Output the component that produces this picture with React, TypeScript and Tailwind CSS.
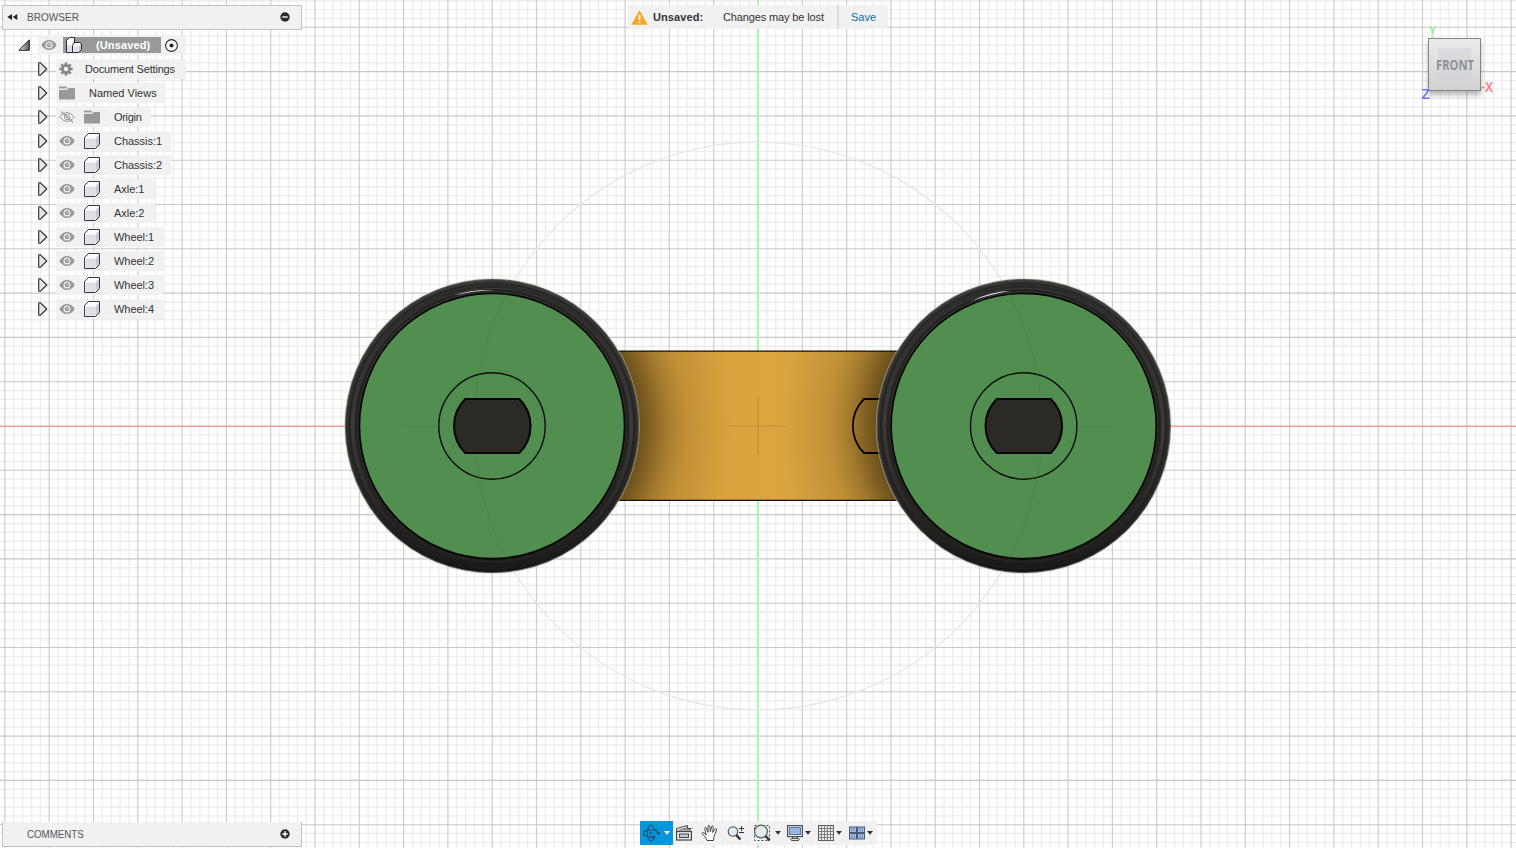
import type { ReactNode } from "react";

const STEP = 44.3;
const MINOR = STEP / 5;
const CX = 758;
const CY = 426;

function gridLines(center: number, size: number) {
  const lines: { pos: number; major: boolean }[] = [];
  const n = Math.ceil(size / MINOR);
  for (let i = -n; i <= n; i++) {
    const pos = center + i * MINOR;
    if (pos > -1 && pos < size + 1) lines.push({ pos, major: i % 5 === 0 });
  }
  return lines.sort((a, b) => Number(a.major) - Number(b.major));
}

function Grid() {
  const vertical = gridLines(CX, 1516);
  const horizontal = gridLines(CY, 848);
  return (
    <g>
      {vertical.filter((l) => !l.major).map((l) => (
        <line key={"v" + l.pos} x1={l.pos} x2={l.pos} y1={0} y2={848} stroke="#eeeeee" strokeWidth={1.4} />
      ))}
      {horizontal.filter((l) => !l.major).map((l) => (
        <line key={"h" + l.pos} x1={0} x2={1516} y1={l.pos} y2={l.pos} stroke="#ededed" strokeWidth={1.4} />
      ))}
      {vertical.filter((l) => l.major).map((l) => (
        <line key={"V" + l.pos} x1={l.pos} x2={l.pos} y1={0} y2={848} stroke="#cecece" strokeWidth={1.2} />
      ))}
      {horizontal.filter((l) => l.major).map((l) => (
        <line key={"H" + l.pos} x1={0} x2={1516} y1={l.pos} y2={l.pos} stroke="#c8c8c8" strokeWidth={1.1} />
      ))}
    </g>
  );
}

const HUB = "M-27 -27 H27 A38 38 0 0 1 27 27 H-27 A38 38 0 0 1 -27 -27 Z";

function Wheel({ x, glint }: { x: number; glint: string }) {
  return (
    <g transform={`translate(${x} 426)`}>
      <circle r="146.6" fill="url(#tire)" stroke="#55554f" strokeWidth="0.9" />
      <circle r="142.5" fill="none" stroke="#21201e" strokeWidth="2" opacity="0.7" />
      <circle r="139.5" fill="none" stroke="url(#sheen)" strokeWidth="3" />
      <circle r="135.8" fill="none" stroke="#242321" strokeWidth="2.5" />
      <path d={glint} fill="#eeeeee" />
      <circle r="132.6" fill="#528e50" stroke="#050505" strokeWidth="1.7" />
      <circle r="53.2" fill="none" stroke="#0a0f0a" strokeWidth="1.4" />
    </g>
  );
}

function Shade({ id, cx }: { id: string; cx: number }) {
  return (
    <radialGradient id={id} gradientUnits="userSpaceOnUse" cx={cx} cy="426" r="240">
      <stop offset="0.6" stopColor="#3a2a0c" stopOpacity="0.7" />
      <stop offset="0.66" stopColor="#3a2a0c" stopOpacity="0.52" />
      <stop offset="0.73" stopColor="#3a2a0c" stopOpacity="0.28" />
      <stop offset="0.82" stopColor="#3a2a0c" stopOpacity="0.1" />
      <stop offset="1" stopColor="#3a2a0c" stopOpacity="0" />
    </radialGradient>
  );
}

function Scene() {
  return (
    <svg className="absolute inset-0" width="1516" height="848" viewBox="0 0 1516 848">
      <defs>
        <linearGradient id="tire" x1="0" y1="0" x2="0" y2="1">
          <stop offset="0" stopColor="#3b3a37" />
          <stop offset="0.5" stopColor="#302f2d" />
          <stop offset="0.85" stopColor="#232220" />
          <stop offset="1" stopColor="#151412" />
        </linearGradient>
        <linearGradient id="sheen" x1="0" y1="0" x2="0" y2="1">
          <stop offset="0" stopColor="#2a2927" />
          <stop offset="0.5" stopColor="#3b3b39" />
          <stop offset="1" stopColor="#1c1b19" />
        </linearGradient>
        <linearGradient id="body" x1="0" x2="1" y1="0" y2="0">
          <stop offset="0" stopColor="#cd9a3a" />
          <stop offset="0.3" stopColor="#d29e3c" />
          <stop offset="0.4" stopColor="#d9a43f" />
          <stop offset="0.56" stopColor="#dba640" />
          <stop offset="0.68" stopColor="#d29f3d" />
          <stop offset="1" stopColor="#c99839" />
        </linearGradient>
        <Shade id="shadeL" cx={492} />
        <Shade id="shadeR" cx={1023.7} />
      </defs>
      <Grid />
      <path d="M0 426.3 H1516" stroke="#ff9c9c" strokeWidth="1.2" />
      <path d="M757.9 0 V848" stroke="#a8f7a8" strokeWidth="1.9" />
      <circle cx="758" cy="426" r="283.8" fill="none" stroke="#e6e6e6" strokeWidth="1.2" />
      <rect x="600" y="351" width="316" height="149.5" fill="url(#body)" />
      <rect x="600" y="351" width="316" height="149.5" fill="url(#shadeL)" />
      <rect x="600" y="351" width="316" height="149.5" fill="url(#shadeR)" />
      <path d="M600 351.2 H916 M600 500.4 H916" stroke="#15110a" strokeWidth="1.3" />
      <path d="M900 399 H864 A38.3 38.3 0 0 0 864 453 H900" fill="none" stroke="#060402" strokeWidth="1.8" />
      <path d="M729.5 426 H786.5 M758 397.5 V454.5" stroke="#a5762a" strokeWidth="1.2" opacity="0.45" />
      <circle cx="492" cy="426" r="147.4" fill="none" stroke="#c8c2b3" strokeWidth="0.6" />
      <circle cx="1023.7" cy="426" r="147.4" fill="none" stroke="#c8c2b3" strokeWidth="0.6" />
      <Wheel x={492} glint="M-38 -130.5 Q-20 -136.6 2 -135.9 Q-20 -135 -38 -130.5Z" />
      <Wheel x={1023.7} glint="M-53 -124.8 Q-34 -134 -13 -135.2 Q-34 -131.6 -53 -124.8Z" />
      <g fill="none" stroke="#467c49" strokeWidth="1.1" opacity="0.4">
        <path d="M404 426 H438 M1078 426 H1112" />
        <path d="M507 293.6 A282 282 0 0 0 507 558.4" />
        <path d="M1009 293.6 A282 282 0 0 1 1009 558.4" />
      </g>
      <path d={HUB} transform="translate(492.3 426)" fill="#2b2a27" stroke="#030303" strokeWidth="2" strokeLinejoin="round" />
      <path d={HUB} transform="translate(1023.8 426)" fill="#2b2a27" stroke="#030303" strokeWidth="2" strokeLinejoin="round" />
    </svg>
  );
}

const Eye = ({ off = false }: { off?: boolean }) => (
  <svg width="16" height="12" viewBox="0 0 16 12" className="shrink-0">
    {off ? (
      <g fill="none" stroke="#999" strokeWidth="1">
        <path d="M.7 6 Q8-3 15.3 6 Q8 15 .7 6Z" />
        <circle cx="8" cy="6" r="2.6" />
        <path d="M2 .5 L14 11.5" strokeWidth="1.2" />
      </g>
    ) : (
      <>
        <path d="M.3 6 C4-.8 12-.8 15.7 6 C12 12.800 4 12.800 .3 6Z" fill="#999" />
        <circle cx="8" cy="6" r="2.9" fill="#999" stroke="#ececec" strokeWidth="1.3" />
        <circle cx="8.2" cy="5.8" r=".8" fill="#eee" />
      </>
    )}
  </svg>
);

const Folder = () => (
  <svg width="16" height="14" viewBox="0 0 16 14" className="shrink-0">
    <path d="M0 .5h7l1.500 2H0z" fill="#999" />
    <path d="M0 4h8l2-2h6v11.500H0z" fill="#999" />
    <path d="M0 3.300h7.800l1.500-1.700" fill="none" stroke="#e2e2e2" strokeWidth=".8" />
  </svg>
);

const Cube = () => (
  <svg width="16" height="16" viewBox="0 0 16 16" className="shrink-0">
    <path d="M.5 4.500 L4.500.5 H15.500 V11.500 L11.500 15.500 H.5Z" fill="#fdfdfe" />
    <path d="M1.500 5.500 H11 V14.800 H1.500Z" fill="#dfe0e6" />
    <path d="M11.500 5.300 L15 1.800 V11.200 L11.500 14.700Z" fill="#c9cbd4" />
    <path d="M.5 4.500 L4.500.5 H15.500 V11.500 L11.500 15.500 H.5Z" fill="none" stroke="#36363c" strokeWidth="1" strokeLinejoin="round" />
  </svg>
);

const Gear = () => (
  <svg width="14" height="14" viewBox="0 0 14 14" className="shrink-0">
    <g fill="#858585">
      {[0, 45, 90, 135].map((a) => (
        <rect key={a} x="5.7" y=".4" width="2.6" height="13.2" transform={`rotate(${a} 7 7)`} />
      ))}
      <circle cx="7" cy="7" r="4.8" />
    </g>
    <circle cx="7" cy="7" r="2.3" fill="#f1f1f1" />
  </svg>
);

const Expand = () => (
  <svg width="10" height="14" viewBox="0 0 10 14" className="shrink-0">
    <path d="M.7 .8 H2.500 L8.800 7 L2.500 13.200 H.7Z" fill="#e2e5e8" stroke="#2a2a2a" strokeWidth="1.1" strokeLinejoin="round" />
  </svg>
);

type Row = { label: string; width: string; kind: "gear" | "folder" | "origin" | "body" };
const rows: Row[] = [
  { label: "Document Settings", width: "w-[130px]", kind: "gear" },
  { label: "Named Views", width: "w-[110px]", kind: "folder" },
  { label: "Origin", width: "w-[95px]", kind: "origin" },
  { label: "Chassis:1", width: "w-[115px]", kind: "body" },
  { label: "Chassis:2", width: "w-[115px]", kind: "body" },
  { label: "Axle:1", width: "w-[99px]", kind: "body" },
  { label: "Axle:2", width: "w-[99px]", kind: "body" },
  { label: "Wheel:1", width: "w-[107px]", kind: "body" },
  { label: "Wheel:2", width: "w-[107px]", kind: "body" },
  { label: "Wheel:3", width: "w-[107px]", kind: "body" },
  { label: "Wheel:4", width: "w-[107px]", kind: "body" },
];

function TreeRow({ row }: { row: Row }) {
  return (
    <div className="flex h-5 items-center pl-[38px]">
      <Expand />
      <div className={`ml-2 flex h-5 items-center bg-[#f1f1f1] pl-[3px] whitespace-nowrap ${row.width}`}>
        {row.kind === "gear" && <><Gear /><span className="ml-[12px] tracking-[-0.18px]">{row.label}</span></>}
        {row.kind === "folder" && <><Folder /><span className="ml-[14px]">{row.label}</span></>}
        {(row.kind === "origin" || row.kind === "body") && (
          <>
            <Eye off={row.kind === "origin"} />
            <span className="ml-[9px]">{row.kind === "origin" ? <Folder /> : <Cube />}</span>
            <span className={row.kind === "origin" ? "ml-[14px] tracking-[-0.3px]" : "ml-[14px] tracking-[-0.03px]"}>{row.label}</span>
          </>
        )}
      </div>
    </div>
  );
}

function RoundSign({ plus = false }: { plus?: boolean }) {
  return (
    <svg width="10" height="10" viewBox="0 0 10 10">
      <circle cx="5" cy="5" r="4.7" fill="#2a2a2a" />
      <path d={plus ? "M2.300 5h5.400M5 2.300v5.400" : "M2.300 5h5.400"} stroke="#fff" strokeWidth="1.4" />
    </svg>
  );
}

function BrowserPanel() {
  return (
    <div>
      <div className="mt-[5px] ml-[2px] flex h-[25px] w-[300px] items-center border border-[#c3c3c3] bg-[#f1f1f1] pr-[11px] pb-px pl-1 text-[#555]">
        <svg width="11" height="8" viewBox="0 0 11 8"><path d="M5 1v6L.3 4zM10.300 1v6L5.600 4z" fill="#222" /></svg>
        <div className="ml-[9px] flex-1"><span className="inline-block origin-left scale-x-[0.915]">BROWSER</span></div>
        <RoundSign />
      </div>
      <div className="mt-[5px] flex flex-col gap-1">
        <div className="flex h-5 items-center pl-[18px]">
          <svg width="12" height="12" viewBox="0 0 12 12">
            <defs><linearGradient id="fold"><stop stopColor="#eee" /><stop offset="1" stopColor="#555" /></linearGradient></defs>
            <path d="M11.300.8V11.300H.9z" fill="url(#fold)" stroke="#222" strokeWidth="1" />
          </svg>
          <div className="ml-2 flex h-5 w-[148px] items-center bg-[#f1f1f1] pl-[3px]">
            <Eye />
            <div className="ml-[6px] flex h-4 w-[98px] items-center bg-[#999] pl-[3px] font-bold text-white">
              <svg width="16" height="16" viewBox="0 0 16 16">
                <path d="M.5 3.500 L3.500.5 H8.500 V5.500 H13.500 L15.500 8 V12.500 L12.500 15.500 H.5Z" fill="#fff" />
                <path d="M1 8H6V15H1zM7.500 9.500H12V15H7.500z" fill="#dfe0e7" />
                <path d="M6.500 5L8.500 2.500V6L6.500 8zM12.500 9.500L15 7.500V12.500L12.500 15z" fill="#c6c8d1" />
                <path d="M6.500 15.500 H.5 V3.500 L3.500.5 H8.500 V5.500 H13.500 L15.500 7 V12.500 L12.500 15.500 H6.500 V8.500 L8.500 5.500" fill="none" stroke="#292a30" strokeLinejoin="round" />
              </svg>
              <span className="ml-[14px] tracking-[0.12px]">(Unsaved)</span>
            </div>
            <svg className="ml-1" width="13" height="13" viewBox="0 0 13 13">
              <circle cx="6.5" cy="6.5" r="5.9" fill="#fff" stroke="#222" strokeWidth="1.1" /><circle cx="6.5" cy="6.5" r="2.1" fill="#222" />
            </svg>
          </div>
        </div>
        {rows.map((r) => <TreeRow key={r.label} row={r} />)}
      </div>
    </div>
  );
}

function UnsavedNotice() {
  return (
    <div className="mt-[5px] flex h-6 w-[260px] items-center bg-[#f1f1f1] pl-[3px] whitespace-nowrap text-[#333]">
      <svg width="17" height="15" viewBox="0 0 17 15">
        <path d="M8.500.3 L16.700 14.700 H.3Z" fill="#fba325" />
        <path d="M8.500 5v5M8.500 11.500v1.800" stroke="#fff" strokeWidth="1.9" />
      </svg>
      <b className="ml-[5px] w-[70px] tracking-[0.1px]">Unsaved:</b>
      <span className="w-[114px] tracking-[-0.13px]">Changes may be lost</span>
      <span className="h-6 w-0.5 bg-[#dcdcdc]" />
      <span className="ml-[12px] text-[#0d6eb0]">Save</span>
    </div>
  );
}

function ViewCube() {
  return (
    <div className="relative mt-[38px] mr-[35px] flex h-[53px] w-[53px] items-center justify-center border border-[#858585] bg-gradient-to-b from-[#ebebeb] to-[#d2d2d2] shadow-[0_4px_5px_rgba(0,0,0,0.28)]">
      <div className="absolute top-[9px] left-[9px] h-[33px] w-[33px] bg-[#cdd2d8]/50" />
      <svg className="absolute -top-[17px] -left-[11px] overflow-visible" width="76" height="78" viewBox="0 0 76 78">
        <text x="11" y="12.5" fontFamily="Open Sans, sans-serif" fontSize="12.5" fontWeight="600" fill="#86ee86" textLength="7" lengthAdjust="spacingAndGlyphs">Y</text>
        <path d="M15 14.500v2" stroke="#86ee86" strokeWidth="1.5" />
        <text x="3.5" y="77" fontFamily="Open Sans, sans-serif" fontSize="14" fontWeight="600" fill="#7272f2" textLength="8.5" lengthAdjust="spacingAndGlyphs">Z</text>
        <text x="67" y="69.5" fontFamily="Open Sans, sans-serif" fontSize="14" fontWeight="600" fill="#ff7777" textLength="8" lengthAdjust="spacingAndGlyphs">X</text>
        <path d="M63.500 65.500h3" stroke="#ff7777" strokeWidth="1.5" />
        <text x="18" y="48" fontFamily="Open Sans, sans-serif" fontSize="14.5" fontWeight="700" fill="#8d9297" textLength="38" lengthAdjust="spacingAndGlyphs">FRONT</text>
      </svg>
    </div>
  );
}

const Caret = ({ white = false }: { white?: boolean }) => (
  <svg width="6" height="4" viewBox="0 0 6 4" className="shrink-0"><path d="M0 0h6L3 3.700z" fill={white ? "#fff" : "#333"} /></svg>
);

const Icon = ({ children, className }: { children: ReactNode; className: string }) => (
  <svg width="18" height="18" viewBox="0 0 18 18" className={`shrink-0 ${className}`}>{children}</svg>
);

function NavBar() {
  return (
    <div className="mb-[3px] flex h-6 w-[237px] items-center bg-[#f1f1f1]">
      <div className="flex h-6 w-[33px] shrink-0 items-center bg-[#0796dc]">
        <Icon className="ml-[2px]">
          <g fill="none" stroke="#224e70" strokeWidth="1.1">
            <path d="M12.500 12.500C8 14 1.500 12.300 1.500 9.300C1.500 6.500 7 5.300 12 6.300C15.500 7 17 8.500 16.600 10.300L14.600 8.800M16.600 10.300L17.600 8" />
            <path d="M12 6.300C12 3 10.500 1 9 1C6.800 1 5.500 5 5.500 9C5.500 13.500 7 17 9 17C10.500 17 11.500 15 12 12.500L9.800 14M12 12.500L13 14.600" />
            <path d="M7.500 9h3M9 7.500v3M13 5.500h2M14 4.500v2" />
          </g>
        </Icon>
        <span className="ml-1"><Caret white /></span>
      </div>
      <Icon className="ml-[2px]">
        <path d="M1.500 7V4.500L12.500 1.500V4.500H16.500" fill="none" stroke="#444" />
        <path d="M3 5.800L12 3.200V5H16V6.500H3z" fill="#888" />
        <rect x="1.6" y="7.5" width="14.8" height="8.500" fill="#eee" stroke="#444" strokeWidth="1.2" />
        <rect x="4.5" y="10" width="9" height="3.500" fill="#c3c7ce" stroke="#444" />
      </Icon>
      <Icon className="ml-[8px]">
        <path d="M6 16.500C5 14 3 11.500 1.300 9.700C.6 8.700 2 8 3 8.800L5.300 11L3.700 4.600C3.500 3.200 5 3 5.400 4.200L7 8.300L7 2.300C7.100 1 8.700 1 8.800 2.300L9.300 7.800L10.700 2.700C11.100 1.500 12.500 1.900 12.300 3.200L11.600 8.500L14.200 5C15 4.100 16.100 4.900 15.600 6L13 12.200L12.500 16.500Z" fill="#fff" stroke="#444" strokeWidth="1" strokeLinejoin="round" />
      </Icon>
      <Icon className="ml-[8px]">
        <circle cx="6" cy="7.5" r="4.7" fill="#e2edf2" stroke="#53616a" strokeWidth="1.2" />
        <path d="M9.300 11.200L13.400 15.500" stroke="#303943" strokeWidth="2.5" />
        <path d="M12 4.500h5M14.500 2v5M12 8.500h5" stroke="#333" />
      </Icon>
      <Icon className="ml-[8px]">
        <rect x="1.5" y="1.5" width="15" height="15" fill="none" stroke="#444" strokeDasharray="2 2" />
        <circle cx="8" cy="7.5" r="6.4" fill="#e3eceb" stroke="#4e5b62" strokeWidth="1.2" />
        <path d="M12.600 12.200L16.700 16.400" stroke="#333c43" strokeWidth="2.6" />
      </Icon>
      <span className="ml-[4px] flex"><Caret /></span>
      <Icon className="ml-[5px]">
        <rect x="1.6" y="1.6" width="14.8" height="11" fill="#eee" stroke="#454a53" strokeWidth="1.2" />
        <rect x="3.6" y="3.6" width="10.8" height="7" fill="#96b7df" stroke="#4c6184" strokeWidth=".8" />
        <path d="M6.500 13v2M11.500 13v2" stroke="#444" />
        <ellipse cx="9" cy="15.500" rx="4.500" ry="1.200" fill="#e5e5e5" stroke="#444" />
      </Icon>
      <span className="ml-px flex"><Caret /></span>
      <Icon className="ml-[6px]">
        <rect x="1.5" y="1.5" width="15" height="15" fill="#ececec" stroke="#555" />
        <path d="M4.500 1v16M7.500 1v16M10.500 1v16M13.500 1v16M1 4.500h16M1 7.500h16M1 10.500h16M1 13.500h16" stroke="#747474" strokeWidth=".9" />
      </Icon>
      <span className="ml-px flex"><Caret /></span>
      <Icon className="ml-[6px]">
        {[[1.5, 3], [9.5, 3], [1.5, 9.5], [9.5, 9.5]].map(([x, y]) => (
          <g key={`${x}-${y}`}>
            <rect x={x} y={y} width="7" height="5.5" fill="#aac3e6" stroke="#4a5974" />
            <rect x={x + 1.8} y={y + 1.6} width="3.4" height="2.3" fill="none" stroke="#6e8dbb" strokeWidth=".8" />
          </g>
        ))}
      </Icon>
      <span className="ml-px flex"><Caret /></span>
    </div>
  );
}

export default function App() {
  return (
    <div className="relative h-[848px] w-[1516px] overflow-hidden bg-white font-['Liberation_Sans',Arial,sans-serif] text-[11px] leading-[14px] text-[#333]">
      <Scene />
      <div className="relative flex h-full flex-col justify-between">
        <div className="grid grid-cols-[628px_260px_1fr] items-start">
          <BrowserPanel />
          <UnsavedNotice />
          <div className="flex justify-end"><ViewCube /></div>
        </div>
        <div className="grid grid-cols-[640px_1fr] items-end">
          <div className="mb-px ml-[2px] flex h-[25px] w-[300px] items-center border border-t-0 border-[#c3c3c3] bg-[#f1f1f1] pr-[11px] pl-6 text-[#555]">
            <div className="flex-1"><span className="inline-block origin-left scale-x-[0.885]">COMMENTS</span></div>
            <RoundSign plus />
          </div>
          <NavBar />
        </div>
      </div>
    </div>
  );
}
